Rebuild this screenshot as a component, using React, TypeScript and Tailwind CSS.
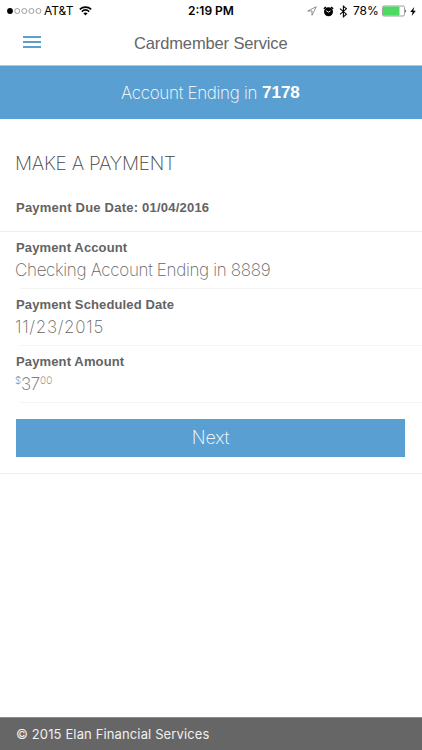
import React from "react";

const light = "font-['Inter','Liberation_Sans',sans-serif] font-extralight whitespace-nowrap";
const bold = "font-['Liberation_Sans',sans-serif] font-bold whitespace-nowrap";

function StatusBar() {
  return (
    <div className="flex h-[22px] items-center text-black">
      <div className="flex w-[180px] items-center pl-[7px]">
        <svg width="35" height="8" viewBox="0 0 35 8">
          <circle cx="3" cy="4" r="2.9" fill="#000" />
          {[10.2, 17.3, 24.4, 31.5].map((x) => (
            <circle key={x} cx={x} cy="4" r="2.5" fill="none" stroke="#777" strokeWidth="0.7" />
          ))}
        </svg>
        <span className="ml-[2px] w-[30px] whitespace-nowrap font-['Inter',sans-serif] text-[12px] leading-[22px]">AT&amp;T</span>
        <svg className="ml-[5px]" width="13" height="10" viewBox="0 0 13 10">
          <path d="M0.8 3.4C4 .4 9 .4 12.2 3.4M2.8 5.6C5 3.6 8 3.6 10.2 5.6" fill="none" stroke="#000" strokeWidth="1.6" />
          <path d="M4.4 7.3C5.7 6.2 7.3 6.2 8.6 7.3L6.5 9.5Z" />
        </svg>
      </div>
      <span className="ml-[8px] w-[112px] whitespace-nowrap font-['Inter',sans-serif] text-[12px] font-semibold leading-[22px]">2:19 PM</span>
      <div className="flex items-center pl-[7px]">
        <svg width="10" height="10" viewBox="0 0 10 10">
          <path d="M9.3.7L.8 5H5V9.3Z" fill="none" stroke="#777" strokeWidth="0.8" strokeLinejoin="round" />
        </svg>
        <svg className="ml-[6px]" width="11" height="11" viewBox="0 0 11 11">
          <circle cx="5.5" cy="5.7" r="4.5" />
          <path d="M.8 2.8L2.9.9M10.2 2.8L8.1.9" stroke="#000" strokeWidth="1.4" />
          <path d="M3.2 4.7L5.5 6.2L7.5 4.9" fill="none" stroke="#fff" strokeWidth="0.9" />
        </svg>
        <svg className="ml-[5px]" width="9" height="13" viewBox="0 0 9 13">
          <path d="M1 3.6L7.4 9.2L4.4 11.8V1.2L7.4 3.8L1 9.4" fill="none" stroke="#000" strokeWidth="1.1" />
        </svg>
        <span className="ml-[5px] w-[27px] whitespace-nowrap font-['Inter',sans-serif] text-[12px] leading-[22px]">78%</span>
        <svg className="ml-[2px]" width="25" height="12" viewBox="0 0 25 12">
          <rect x="0.5" y="1" width="22" height="10" rx="1.5" fill="#fff" stroke="#777" strokeWidth="0.7" />
          <rect x="1" y="1.5" width="16.5" height="9" rx="0.8" fill="#4cd964" />
          <path d="M23.3 4.2Q25 6 23.3 7.8Z" fill="#222" />
        </svg>
        <svg className="ml-[3px]" width="6" height="9" viewBox="0 0 6 9">
          <path d="M4.2 0L.2 5H2.6L1.7 9L5.8 3.7H3.3Z" />
        </svg>
      </div>
    </div>
  );
}

function Field({ label, children }: { label: string; children: React.ReactNode }) {
  return (
    <div className="h-[57px] pl-4">
      <div className={`${bold} h-[22px] pt-[6px] text-[13px] leading-[20px] tracking-[0.13px] text-[#636363]`}>{label}</div>
      <div className={`${light} -ml-px h-[34px] pt-[5px] text-[17px] leading-[22px] text-[#666]`}>{children}</div>
      <div className="ml-1 h-px bg-[#f3f3f3]" />
    </div>
  );
}

export default function App() {
  return (
    <div className="flex h-[750px] w-[422px] flex-col overflow-hidden bg-white">
      <StatusBar />
      <header className="flex h-[44px] items-center border-b border-[#a5cbe5] pl-[23px]">
        <div className="flex w-[18px] flex-col gap-[3px] pb-[3px]">
          <div className="h-[2px] bg-[#5b9fd0]" />
          <div className="h-[2px] bg-[#5b9fd0]" />
          <div className="h-[2px] bg-[#5b9fd0]" />
        </div>
        <h1 className="ml-[93px] whitespace-nowrap pb-[2px] font-['Liberation_Sans',sans-serif] text-[16.5px] leading-[42px] tracking-[-0.13px] text-[#666]">Cardmember Service</h1>
      </header>
      <div className="flex h-[53px] bg-[#5a9fd2] pl-[121px] text-white">
        <span className={`${light} w-[141px] text-[17px] leading-[54px] tracking-[-0.3px]`}>Account Ending in </span>
        <span className={`${bold} text-[17px] leading-[54px]`}>7178</span>
      </div>
      <main className="flex-1">
        <h2 className={`${light} h-[77px] pl-[15px] pt-[32px] text-[19px] leading-[26px] tracking-[-0.25px] text-[#444]`}>MAKE A PAYMENT</h2>
        <div className={`${bold} h-[36px] border-b border-[#efefef] pl-4 text-[13px] leading-[24px] tracking-[0.22px] text-[#636363]`}>Payment Due Date: 01/04/2016</div>
        <Field label="Payment Account">
          <span className="tracking-[-0.33px]">Checking Account Ending in 8889</span>
        </Field>
        <Field label="Payment Scheduled Date">
          <span className="tracking-[0.7px]">11/23/2015</span>
        </Field>
        <Field label="Payment Amount">
          <span className="flex items-start">
            <span className="w-[6px] text-[10px] leading-[15px]">$</span>
            <span className="w-[19px] tracking-[-0.3px]">37</span>
            <span className="text-[10px] leading-[15px] tracking-[0.1px]">00</span>
          </span>
        </Field>
        <div className="border-b border-[#f1f1f1] pb-4 pl-4 pr-[17px] pt-4">
          <button className={`${light} block h-[38px] w-full bg-[#5a9fd2] text-[18px] leading-[38px] tracking-[-0.2px] text-white`}>Next</button>
        </div>
      </main>
      <footer className="h-[33px] border-t border-[#8c8c8c] bg-[#666] pl-4 font-['Inter',sans-serif] text-[13px] leading-[32px] tracking-[0.13px] text-[#f0f0f0]">© 2015 Elan Financial Services</footer>
    </div>
  );
}
